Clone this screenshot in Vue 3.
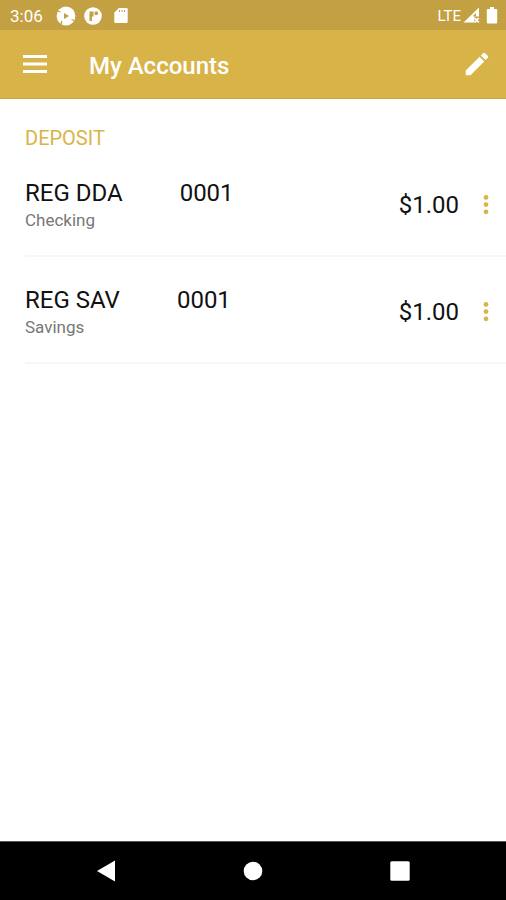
<script setup>
const accounts = [
  { id: 1, name: 'REG DDA', number: '0001', kind: 'Checking', balance: '$1.00' },
  { id: 2, name: 'REG SAV', number: '0001', kind: 'Savings', balance: '$1.00' },
]
</script>

<template>
  <div class="screen">
    <div class="status">
      <span class="status__time">3:06</span>
      <svg class="status__disc" width="20" height="20" viewBox="0 0 20 20" aria-hidden="true">
        <circle cx="10" cy="10" r="9.4" fill="#fff" />
        <path d="M1.500 5l3 .8M5 18l.8-3M18.500 14.500l-3-.8" stroke="#c3a041" stroke-width="1.200" />
        <path d="M8 7v6l5-3z" fill="#c3a041" />
      </svg>
      <svg class="status__disc" width="18" height="18" viewBox="0 0 18 18" aria-hidden="true">
        <circle cx="9" cy="9" r="8.800" fill="#fff" />
        <path d="M5.500 4.500h4v5H8v4.500H5.500z" fill="#c3a041" />
        <rect x="10.500" y="4.500" width="3.500" height="3.500" rx="1" fill="#c3a041" />
      </svg>
      <svg width="14" height="17" viewBox="0 0 14 17" aria-hidden="true">
        <path d="M5 1h7.500a1.200 1.200 0 0 1 1.200 1.200v12.600a1.200 1.200 0 0 1-1.200 1.200h-11A1.200 1.200 0 0 1 .3 14.800V5.500z" fill="#fff" />
        <path d="M5.500 3v2M8 3v2M10.500 3v2" stroke="#c3a041" stroke-width="1" />
      </svg>
      <span class="status__net">LTE</span>
      <svg class="status__signal" width="17" height="17" viewBox="0 0 17 17" aria-hidden="true">
        <path d="M16 .500v9h-4.500v6H.500z" fill="#fff" />
        <path d="M13 6v3.500h-2.500v-1z" fill="#c3a041" />
        <path d="m11.800 11 4 4.500m0-4.500-4 4.500" stroke="#fff" stroke-width="1.700" />
      </svg>
      <svg width="12" height="17" viewBox="0 0 12 17" aria-hidden="true">
        <path d="M4 0h4v2h2.200a1 1 0 0 1 1 1v12.500a1 1 0 0 1-1 1H1.800a1 1 0 0 1-1-1V3a1 1 0 0 1 1-1H4z" fill="#fff" />
      </svg>
    </div>

    <header class="bar">
      <button type="button" class="icon-btn" aria-label="Menu">
        <svg width="24" height="18" viewBox="0 0 24 18">
          <path d="M0 1.500h24M0 9h24M0 16.500h24" stroke="#fff" stroke-width="2.800" />
        </svg>
      </button>
      <h1 class="bar__title">My Accounts</h1>
      <button type="button" class="icon-btn" aria-label="Edit">
        <svg width="30" height="30" viewBox="0 0 24 24" fill="#fff">
          <path d="M3 17.250V21h3.750L17.810 9.940l-3.750-3.750L3 17.250zM20.710 7.040a1 1 0 0 0 0-1.410l-2.340-2.340a1 1 0 0 0-1.410 0l-1.830 1.830 3.750 3.750 1.830-1.830z" />
        </svg>
      </button>
    </header>

    <main class="content">
      <h2 class="group">DEPOSIT</h2>
      <ul class="list">
        <li v-for="a in accounts" :key="a.id" class="account">
          <div class="account__info">
            <div class="account__title">
              <span>{{ a.name }}</span>
              <span>{{ a.number }}</span>
            </div>
            <div class="account__kind">{{ a.kind }}</div>
          </div>
          <span class="account__balance">{{ a.balance }}</span>
          <button type="button" class="icon-btn" :aria-label="`Options for ${a.name}`">
            <svg width="6" height="20" viewBox="0 0 6 20" fill="#d9b446">
              <circle cx="3" cy="2.400" r="2.400" />
              <circle cx="3" cy="9.600" r="2.400" />
              <circle cx="3" cy="16.800" r="2.400" />
            </svg>
          </button>
        </li>
      </ul>
    </main>

    <nav class="nav">
      <button type="button" class="icon-btn" aria-label="Back">
        <svg width="20" height="22" viewBox="0 0 20 22"><path d="M19 .500v21L1 11z" fill="#fff" /></svg>
      </button>
      <button type="button" class="icon-btn" aria-label="Home">
        <svg width="20" height="20" viewBox="0 0 20 20"><circle cx="10" cy="10" r="9.300" fill="#fff" /></svg>
      </button>
      <button type="button" class="icon-btn" aria-label="Recent apps">
        <svg width="20" height="20" viewBox="0 0 20 20"><rect x=".300" y=".300" width="19.400" height="19.400" rx="1.500" fill="#fff" /></svg>
      </button>
    </nav>
  </div>
</template>

<style>
body{margin:0;background:#fff}
</style>

<style scoped>
.screen{display:flex;flex-direction:column;min-height:100vh;background:#fff;color:#111;
  font-family:Roboto,"Noto Sans",sans-serif}
.icon-btn{display:flex;align-items:center;justify-content:center;padding:0;border:0;background:none;cursor:pointer}

.status{display:flex;align-items:center;height:30px;padding:1px 8px 0 10px;background:#c3a041;color:#fff;
  font-size:17px;line-height:20px;box-sizing:border-box}
.status__time{margin-right:13px}
.status__disc{margin-right:8px}
.status__disc + .status__disc{margin-right:12px}
.status__net{margin-left:auto;font-size:15px}
.status__signal{margin:0 6px 0 2px}

.bar{display:flex;align-items:center;height:69px;padding:0 14px 0 23px;background:#d8b348;color:#fff;
  border-bottom:1px solid #cda83b;box-sizing:border-box}
.bar__title{flex:1;margin:3px 0 0 42px;font-size:24px;line-height:32px;font-weight:500}

.content{flex:1;padding:27px 0 0 25px}
.group{margin:0;font-size:20px;line-height:24px;font-weight:400;color:#d9b446}
.list{margin:0;padding:0;list-style:none}
.account{display:flex;align-items:center;height:107px;padding:4px 17px 0 0;box-sizing:border-box;
  border-bottom:2px solid #f6f6f6}
.account__info{flex:1}
.account__title{display:flex;gap:57px;font-size:24px;line-height:30px}
.account__kind{font-size:17px;line-height:24px;color:#777}
.account__balance{margin-right:24px;font-size:24px;line-height:30px}

.nav{display:flex;align-items:center;justify-content:space-between;height:59px;padding:0 96px;
  background:#000;box-sizing:border-box;border-top:1px solid #555}
</style>
